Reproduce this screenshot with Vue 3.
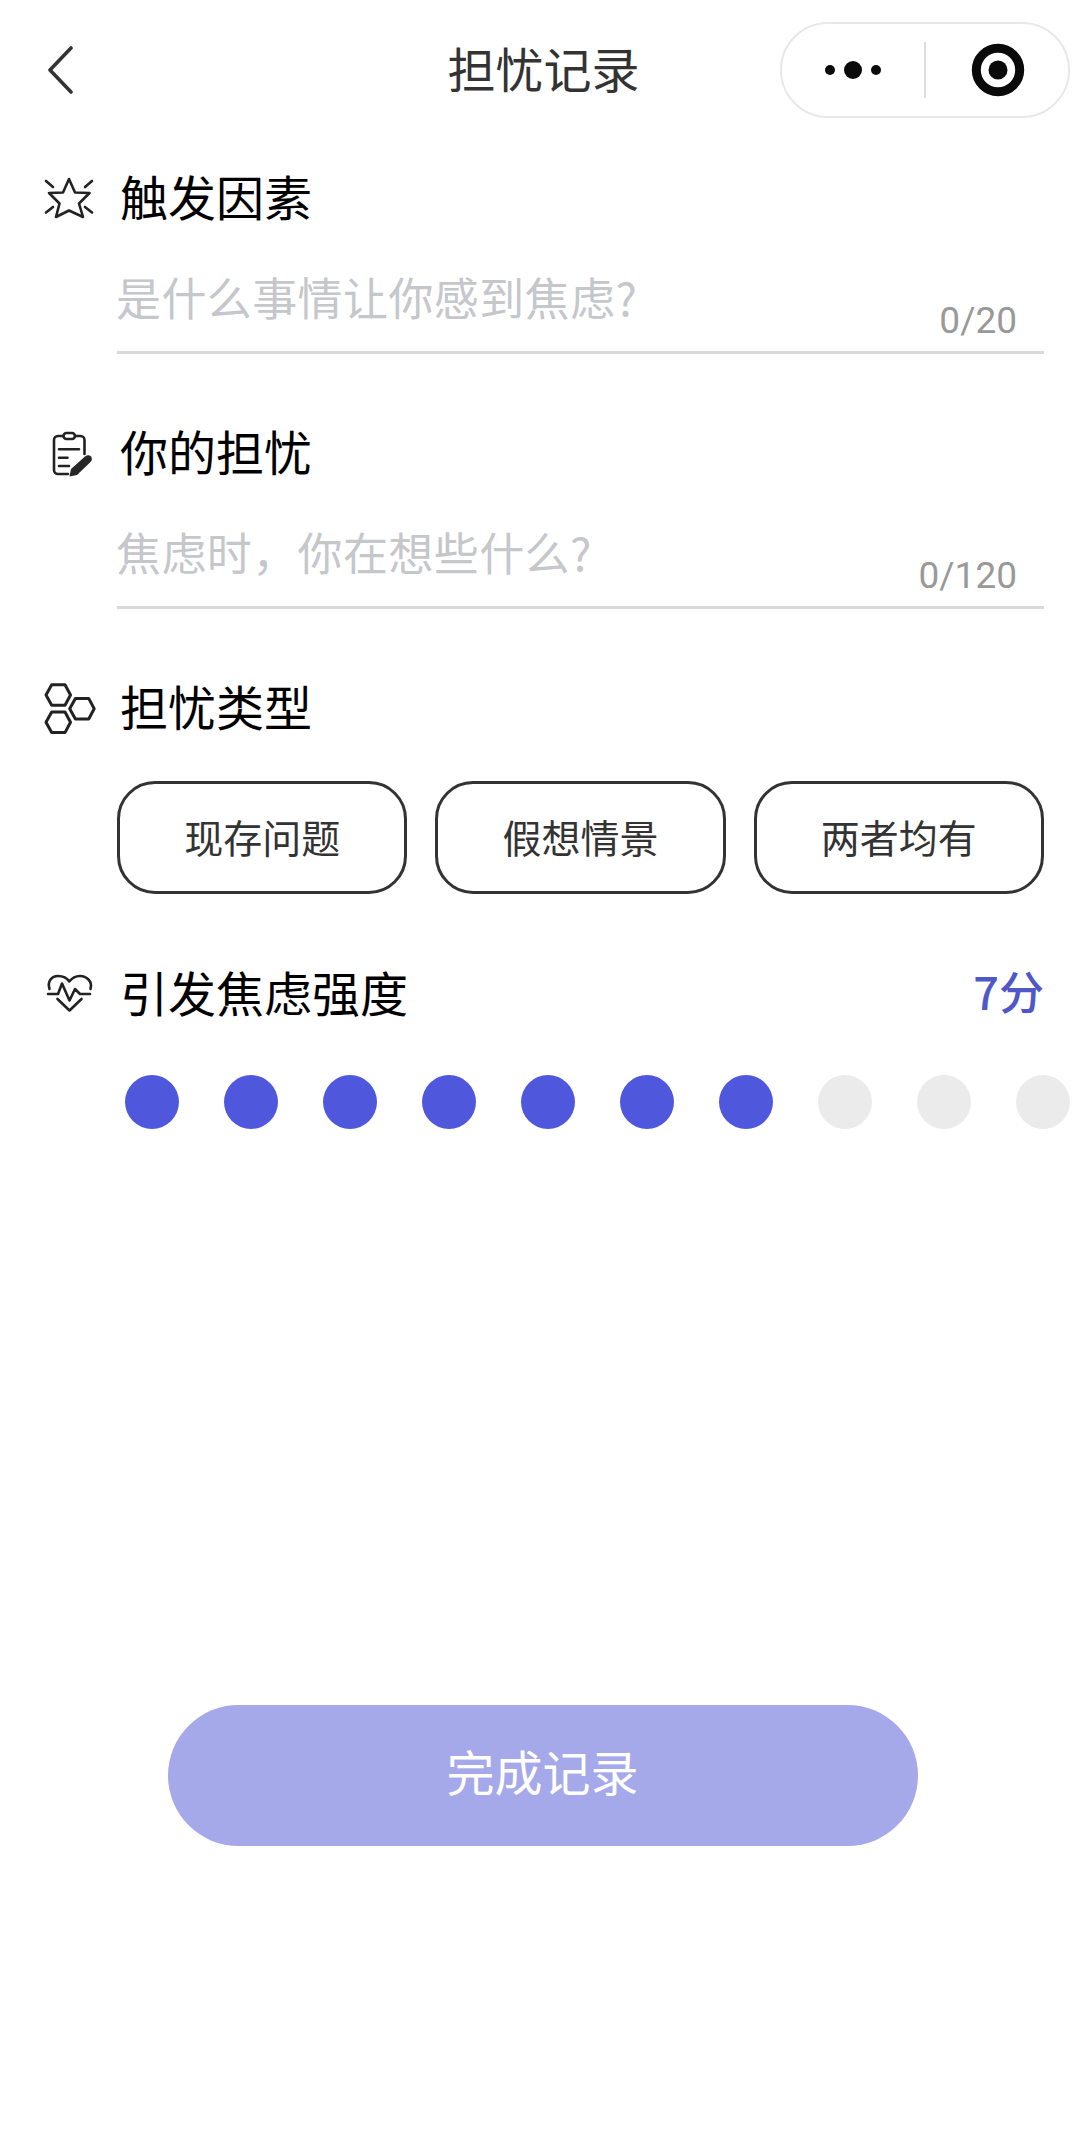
<script setup>
const types = ['现存问题', '假想情景', '两者均有']
const score = 7
const dots = Array.from({ length: 10 }, (_, i) => i < score)
</script>

<template>
  <div class="page">
    <header class="nav">
      <svg class="back" width="30" height="48" viewBox="0 0 30 48" aria-hidden="true">
        <path d="M25 2 L4 24 L25 46" fill="none" stroke="#333" stroke-width="3.6" stroke-linecap="round" stroke-linejoin="round" />
      </svg>
      <h1 class="nav-title">担忧记录</h1>
      <div class="capsule">
        <div class="capsule-cell">
          <svg width="64" height="20" viewBox="0 0 64 20" aria-hidden="true">
            <circle cx="9" cy="10" r="5" fill="#0a0a0a" />
            <circle cx="32" cy="10" r="9" fill="#0a0a0a" />
            <circle cx="55" cy="10" r="5" fill="#0a0a0a" />
          </svg>
        </div>
        <span class="capsule-line"></span>
        <div class="capsule-cell target">
          <svg width="54" height="54" viewBox="0 0 54 54" aria-hidden="true">
            <circle cx="27" cy="27" r="21.7" fill="none" stroke="#0a0a0a" stroke-width="9" />
            <circle cx="27" cy="27" r="9.5" fill="#0a0a0a" />
          </svg>
        </div>
      </div>
    </header>

    <main class="form">
      <section class="block first">
        <div class="heading">
          <svg class="icon" viewBox="15 14 48 48" aria-hidden="true">
            <path d="M39 19 L45 32.5 L59.5 33 L49 43.5 L53 57 L39 50.5 L26 57 L29.5 43.5 L19 33 L33 32.5 Z" class="line" />
            <path d="M16 21 L23 27 M62 21 L55 27 M16 52.5 L23 47 M62 52.5 L55 47" class="line" />
          </svg>
          <h2>触发因素</h2>
        </div>
        <div class="field">
          <span class="placeholder">是什么事情让你感到焦虑?</span>
          <span class="count">0/20</span>
        </div>
      </section>

      <section class="block">
        <div class="heading">
          <svg class="icon" viewBox="15 14 48 48" aria-hidden="true">
            <path d="M33 21 H28 a4 4 0 0 0 -4 4 V55 a4 4 0 0 0 4 4 H38 M45 21 H50.5 a4 4 0 0 1 4 4 V39" class="line" />
            <rect x="33.5" y="18" width="11.5" height="6" rx="3" class="line" />
            <path d="M29 34.3 H49 M29 42.7 H37.5 M29 51 H39" class="line" />
            <path d="M39.5 61.5 L41 54 L55 41.5 Q58.5 39 61 41.5 Q63 44.5 60.5 47 L47 60 Z" fill="#262626" />
          </svg>
          <h2>你的担忧</h2>
        </div>
        <div class="field">
          <span class="placeholder">焦虑时&#xFF0C;你在想些什么?</span>
          <span class="count">0/120</span>
        </div>
      </section>

      <section class="block">
        <div class="heading">
          <svg class="icon" viewBox="15 14 48 48" aria-hidden="true">
            <path d="M21.7 14.7 H35 L40.5 25 L35 35.3 H21.7 L16 25 Z" class="line hex" />
            <path d="M45.4 28.4 H58.7 L64.2 38.7 L58.7 49 H45.4 L39.7 38.7 Z" class="line hex" />
            <path d="M21.7 42 H35 L40.5 52.3 L35 62.6 H21.7 L16 52.3 Z" class="line hex" />
          </svg>
          <h2>担忧类型</h2>
        </div>
        <div class="types">
          <div v-for="t in types" :key="t" class="type">{{ t }}</div>
        </div>
      </section>

      <section class="block last">
        <div class="heading">
          <svg class="icon" viewBox="15 16 48 48" aria-hidden="true">
            <path d="M19.5 35 C17 27 22 22 28 22 C33 22 37 24 39.3 27.5 C42 24 45 22 50 22 C56 22 63 27 60.5 35" class="line" />
            <path d="M18 40 H28 L32 29.5 L39.5 46.5 L45 35 L50 40 H60" class="line" />
            <path d="M27.5 45 L39.5 56.5 L51.5 45" class="line" />
          </svg>
          <h2>引发焦虑强度</h2>
          <span class="score">{{ score }}分</span>
        </div>
        <div class="dots">
          <span v-for="(on, i) in dots" :key="i" class="dot" :class="{ on }"></span>
        </div>
      </section>
    </main>

    <div class="footer">
      <button class="submit" type="button">完成记录</button>
    </div>
  </div>
</template>

<style>
html, body { margin: 0; background: #fff; }
</style>

<style scoped>
.page {
  width: 1089px;
  min-height: 2137px;
  box-sizing: border-box;
  overflow: hidden;
  background: #fff;
  font-family: "Noto Sans CJK SC", "Noto Sans", sans-serif;
}
.nav {
  height: 140px;
  box-sizing: border-box;
  padding: 0 19px;
  display: grid;
  grid-template-columns: minmax(0, 1fr) auto minmax(0, 1fr);
  align-items: center;
}
.back { display: block; margin-left: 27px; }
.nav-title {
  margin: 0 2px 0 0;
  padding-bottom: 6px;
  font-size: 48px;
  font-weight: 400;
  line-height: 62px;
  color: #333;
}
.capsule {
  justify-self: end;
  width: 290px;
  height: 96px;
  box-sizing: border-box;
  border: 2px solid #e8e8e8;
  border-radius: 48px;
  display: flex;
  align-items: center;
}
.capsule-cell {
  flex: none;
  width: 142px;
  display: flex;
  align-items: center;
  justify-content: center;
}
.capsule-cell.target {
  padding-left: 2px;
  box-sizing: border-box;
}
.capsule-cell svg { display: block; }
.capsule-line {
  flex: none;
  width: 2px;
  height: 56px;
  background: #ddd;
}
.form { padding: 0 45px; }
.block { margin-top: 65px; }
.block.first { margin-top: 24px; }
.block.last { margin-top: 66px; }
.heading {
  display: flex;
  align-items: center;
  height: 68px;
}
.icon {
  width: 48px;
  height: 48px;
  flex: none;
  margin-right: 27px;
  overflow: visible;
}
.line {
  fill: none;
  stroke: #222;
  stroke-width: 2.6;
  stroke-linecap: round;
  stroke-linejoin: round;
}
.hex { stroke-width: 3; }
h2 {
  margin: 0;
  padding-bottom: 6px;
  font-size: 48px;
  font-weight: 400;
  line-height: 62px;
  color: #000;
}
.score {
  margin-left: auto;
  padding-bottom: 6px;
  font-size: 45px;
  font-weight: 500;
  line-height: 62px;
  color: #4f58c6;
}
.field {
  margin: 29px 0 0 72px;
  height: 90px;
  box-sizing: content-box;
  border-bottom: 3px solid #d8d9db;
  display: flex;
  justify-content: space-between;
}
.placeholder {
  margin-left: -1px;
  font-size: 45px;
  line-height: 72px;
  letter-spacing: 0.4px;
  color: #c5c7cb;
}
.count {
  padding: 34px 27px 0 0;
  font-family: Roboto, "Noto Sans", sans-serif;
  font-size: 37px;
  line-height: 52px;
  color: #999;
}
.types {
  margin: 39px 0 0 72px;
  display: flex;
  gap: 28px;
}
.type {
  flex: 1;
  height: 113px;
  box-sizing: border-box;
  padding-bottom: 4px;
  border: 3px solid #333;
  border-radius: 38px;
  display: flex;
  align-items: center;
  justify-content: center;
  font-size: 39px;
  color: #333;
}
.dots {
  margin: 47px 0 0 80px;
  display: flex;
  gap: 45px;
}
.dot {
  flex: none;
  width: 54px;
  height: 54px;
  border-radius: 50%;
  background: #ebebeb;
}
.dot.on { background: #4f58dc; }
.footer {
  margin-top: 576px;
  padding-right: 4px;
  display: flex;
  justify-content: center;
}
.submit {
  width: 750px;
  height: 141px;
  border: 0;
  border-radius: 71px;
  background: #a6a9e9;
  color: #fff;
  font-family: inherit;
  font-size: 48px;
  padding: 0 0 12px;
}
</style>
